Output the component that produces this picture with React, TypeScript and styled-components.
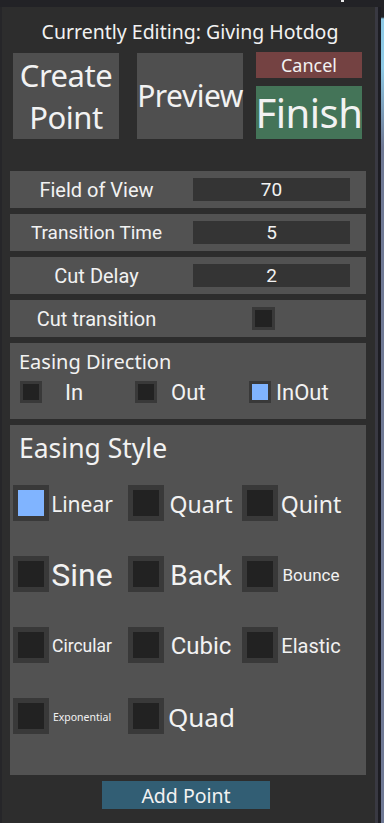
import React from "react"
import styled, { createGlobalStyle } from "styled-components"

const GlobalStyle = createGlobalStyle`
  html, body {
    margin: 0;
    padding: 0;
    background: #2d2d2d;
  }
`

const Frame = styled.div`
  width: 384px;
  height: 823px;
  display: flex;
  flex-direction: column;
  overflow: hidden;
  background: #2d2d2d;
`

const TopBar = styled.div`
  height: 7px;
  background: #222226;
  position: relative;
  &::after {
    content: "";
    position: absolute;
    left: 341px;
    top: 0;
    width: 3px;
    height: 2px;
    background: #e8e8e8;
  }
`

const Body = styled.div`
  flex: 1;
  display: flex;
`

const LeftEdge = styled.div`
  width: 2px;
  background: #262629;
`

const Strip = styled.div<{ $bg: string }>`
  width: 3px;
  background: ${p => p.$bg};
`

const Main = styled.div`
  flex: 1;
  display: flex;
  flex-direction: column;
  padding: 0 9px 0 8px;
  font-family: "Noto Sans", sans-serif;
  color: #f2f2f2;
`

const Title = styled.div`
  height: 45px;
  display: flex;
  align-items: center;
  justify-content: center;
  font-size: 19.5px;
  padding-top: 4px;
  box-sizing: border-box;
  margin-right: -4px;
`

const ButtonRow = styled.div`
  display: flex;
  align-items: flex-start;
  padding-left: 3px;
  height: 87px;
`

const BigButton = styled.div<{ $size: number; $gap?: number }>`
  width: 106px;
  height: 86px;
  margin-top: 1px;
  margin-right: ${p => p.$gap ?? 0}px;
  background: #4f4f4f;
  display: flex;
  align-items: center;
  justify-content: center;
  text-align: center;
  font-size: ${p => p.$size}px;
  line-height: 42px;
  letter-spacing: -0.5px;
`

const SideButtons = styled.div`
  width: 106px;
  display: flex;
  flex-direction: column;
  gap: 8px;
`

const CancelButton = styled.div`
  height: 26px;
  background: #744242;
  display: flex;
  align-items: center;
  justify-content: center;
  font-size: 18px;
`

const FinishButton = styled.div`
  height: 53px;
  background: #447458;
  display: flex;
  align-items: center;
  justify-content: center;
  font-size: 40px;
  letter-spacing: -0.5px;
`

const Settings = styled.div`
  margin-top: 32px;
  display: flex;
  flex-direction: column;
  gap: 6px;
`

const Row = styled.div`
  height: 37px;
  background: #525252;
  display: flex;
  align-items: center;
  font-family: Roboto, sans-serif;
`

const RowLabel = styled.div<{ $size?: number }>`
  width: 173px;
  text-align: center;
  white-space: nowrap;
  font-size: ${p => p.$size ?? 20}px;
`

const ValueBox = styled.div`
  width: 157px;
  height: 23px;
  margin-left: 10px;
  background: #343434;
  display: flex;
  align-items: center;
  justify-content: center;
  font-size: 19px;
`

const Check = styled.div<{ $px: number; $on?: boolean; $border: number }>`
  width: ${p => p.$px}px;
  height: ${p => p.$px}px;
  box-sizing: border-box;
  flex: none;
  border: ${p => p.$border}px solid #393939;
  background: ${p => (p.$on ? "#80b4ff" : "#222222")};
`

const CutCheck = styled(Check)`
  margin-left: 69px;
`

const Panel = styled.div`
  background: #525252;
  display: flex;
  flex-direction: column;
`

const DirectionPanel = styled(Panel)`
  height: 76px;
  margin-top: 6px;
  padding: 7px 0 0 9px;
  box-sizing: border-box;
`

const PanelTitle = styled.div<{ $size: number }>`
  font-size: ${p => p.$size}px;
  line-height: 1.2;
`

const DirectionRow = styled.div`
  display: grid;
  grid-template-columns: 115px 114px 1fr;
  margin-top: 7px;
  padding-left: 1px;
`

const DirectionOption = styled.div`
  display: flex;
  align-items: center;
  font-family: Roboto, sans-serif;
  font-size: 22px;
  height: 22px;
`

const DirectionText = styled.span<{ $offset: number }>`
  margin-left: ${p => p.$offset}px;
`

const StylePanel = styled(Panel)`
  height: 350px;
  margin-top: 6px;
  padding: 8px 0 0 3px;
  box-sizing: border-box;
`

const StyleTitle = styled(PanelTitle)`
  padding-left: 6px;
`

const StyleLabel = styled.div<{ $size: number; $font?: string }>`
  width: 66px;
  padding-top: 3px;
  text-align: center;
  white-space: nowrap;
  font-size: ${p => p.$size}px;
  font-family: ${p => p.$font ?? "\"Noto Sans\""}, sans-serif;
`

const StyleOption = styled.div`
  display: flex;
  align-items: center;
  &:nth-child(3n + 2) ${StyleLabel} {
    margin-left: 4px;
  }
`

const StyleGrid = styled.div`
  display: grid;
  grid-template-columns: 115px 114px 1fr;
  grid-auto-rows: 36px;
  row-gap: 35px;
  margin-top: 20px;
`

const Footer = styled.div`
  display: flex;
  justify-content: center;
  padding-top: 6px;
  padding-right: 4px;
`

const AddButton = styled.div`
  width: 168px;
  height: 28px;
  background: #325e74;
  display: flex;
  align-items: center;
  justify-content: center;
  font-size: 19.5px;
`

const settings = [
  { label: "Field of View", value: "70", size: 20 },
  { label: "Transition Time", value: "5", size: 19 },
  { label: "Cut Delay", value: "2", size: 20 },
]

const directions = [
  { label: "In", offset: 23, on: false },
  { label: "Out", offset: 14, on: false },
  { label: "InOut", offset: 5, on: true },
]

const styles = [
  { label: "Linear", size: 21, on: true },
  { label: "Quart", size: 23 },
  { label: "Quint", size: 23 },
  { label: "Sine", size: 32, font: "Roboto" },
  { label: "Back", size: 28, font: "Roboto" },
  { label: "Bounce", size: 17, font: "Roboto" },
  { label: "Circular", size: 17.5, font: "Roboto" },
  { label: "Cubic", size: 24, font: "Roboto" },
  { label: "Elastic", size: 20, font: "Roboto" },
  { label: "Exponential", size: 10.5 },
  { label: "Quad", size: 26 },
]

const App = () => (
  <Frame>
    <GlobalStyle />
    <TopBar />
    <Body>
      <LeftEdge />
      <Main>
        <Title>Currently Editing: Giving Hotdog</Title>
        <ButtonRow>
          <BigButton $size={31} $gap={18}>
            Create
            <br />
            Point
          </BigButton>
          <BigButton $size={30} $gap={13}>
            Preview
          </BigButton>
          <SideButtons>
            <CancelButton>Cancel</CancelButton>
            <FinishButton>Finish</FinishButton>
          </SideButtons>
        </ButtonRow>

        <Settings>
          {settings.map(s => (
            <Row key={s.label}>
              <RowLabel $size={s.size}>{s.label}</RowLabel>
              <ValueBox>{s.value}</ValueBox>
            </Row>
          ))}
          <Row>
            <RowLabel>Cut transition</RowLabel>
            <CutCheck $px={23} $border={3} />
          </Row>
        </Settings>

        <DirectionPanel>
          <PanelTitle $size={20}>Easing Direction</PanelTitle>
          <DirectionRow>
            {directions.map(d => (
              <DirectionOption key={d.label}>
                <Check $px={22} $border={3} $on={d.on} />
                <DirectionText $offset={d.offset}>{d.label}</DirectionText>
              </DirectionOption>
            ))}
          </DirectionRow>
        </DirectionPanel>

        <StylePanel>
          <StyleTitle $size={26.5}>Easing Style</StyleTitle>
          <StyleGrid>
            {styles.map(s => (
              <StyleOption key={s.label}>
                <Check $px={36} $border={5} $on={s.on} />
                <StyleLabel $size={s.size} $font={s.font}>
                  {s.label}
                </StyleLabel>
              </StyleOption>
            ))}
          </StyleGrid>
        </StylePanel>

        <Footer>
          <AddButton>Add Point</AddButton>
        </Footer>
      </Main>
      <Strip $bg="#393942" />
      <Strip $bg="#1d1d23" />
      <Strip $bg="linear-gradient(#222226 0px, #222226 10px, #8ecae6 12px, #8ecae6 60px, #6e7894 140px, #6e7894)" />
    </Body>
  </Frame>
)

export default App
